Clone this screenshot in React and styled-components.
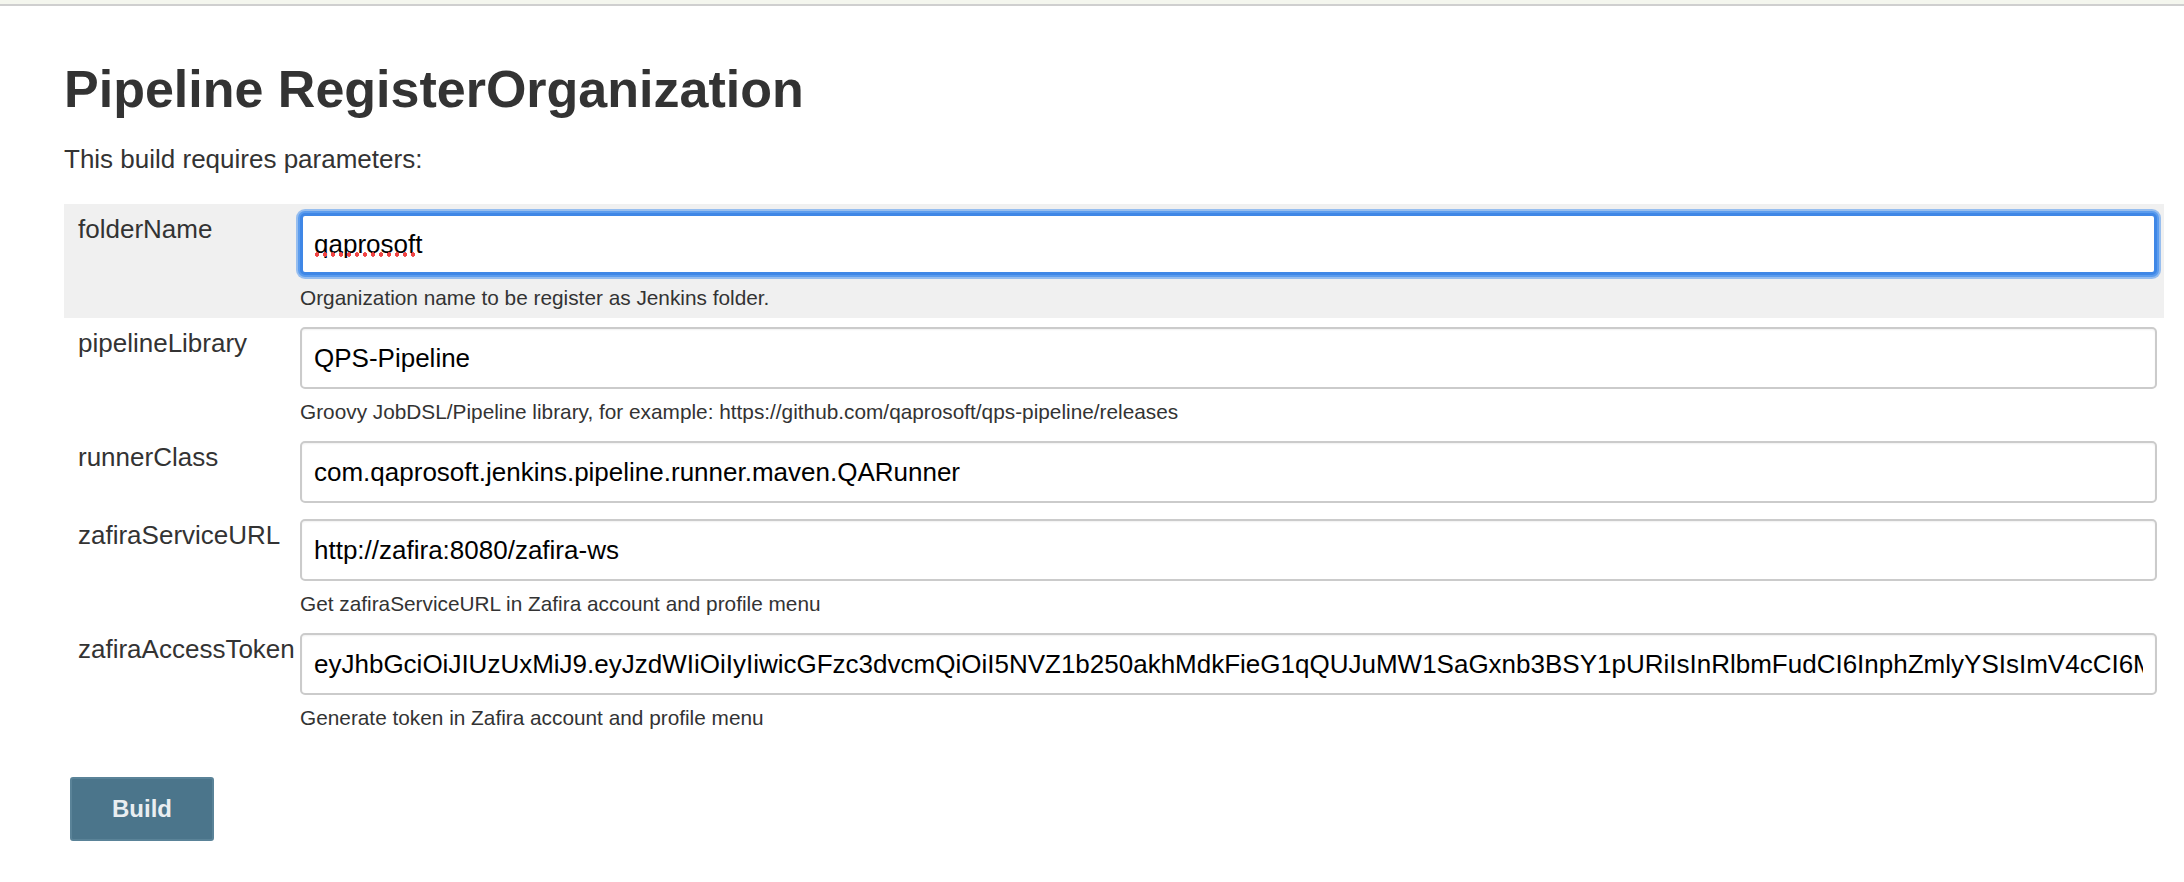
import React from 'react';
import styled, { createGlobalStyle } from 'styled-components';

const GlobalStyle = createGlobalStyle`
  body {
    margin: 0;
    background: #fff;
    font-family: 'Liberation Sans', Arial, Helvetica, sans-serif;
    color: #333;
  }
`;

const TopStrip = styled.div`
  height: 4px;
  background: #f4f6ee;
  border-bottom: 2px solid #cfcfcf;
`;

const Main = styled.div`
  padding: 0 20px 40px 64px;
`;

const Title = styled.h1`
  margin: 53px 0 0;
  font-size: 52px;
  line-height: 60px;
  font-weight: bold;
  color: #333;
`;

const Intro = styled.p`
  margin: 24px 0 0;
  font-size: 26px;
  line-height: 32px;
`;

const ParamTable = styled.div`
  margin-top: 29px;
  display: flex;
  flex-direction: column;
`;

const ParamRow = styled.div`
  display: grid;
  grid-template-columns: 236px 1fr;
  padding: 9px 7px 7px 0;
  background: ${p => (p.$active ? '#f0f0f0' : 'transparent')};
`;

const ParamName = styled.div`
  padding-left: 14px;
  font-size: 26px;
  line-height: 32px;
  white-space: nowrap;
  color: #333;
`;

const FieldColumn = styled.div`
  display: flex;
  flex-direction: column;
  min-width: 0;
`;

const FieldWrap = styled.div`
  position: relative;
`;

const TextInput = styled.input`
  box-sizing: border-box;
  display: block;
  width: 100%;
  height: 62px;
  padding: 0 ${p => (p.$focused ? '11px' : '12px')};
  font-family: inherit;
  font-size: 26px;
  color: #000;
  background: #fff;
  border: ${p => (p.$focused ? '3px solid #3f87e6' : '2px solid #cbcbcb')};
  border-radius: 5px;
  outline: none;
  box-shadow: ${p =>
    p.$focused
      ? '0 0 0 2px #5b9cee, 0 0 0 4px rgba(91, 156, 238, 0.6)'
      : 'inset 0 1px 2px rgba(0, 0, 0, 0.06)'};
`;

const SpellMark = styled.span`
  position: absolute;
  left: 13px;
  top: 39px;
  width: 104px;
  height: 5px;
  background-image: radial-gradient(circle, #f04444 2px, transparent 2.5px);
  background-size: 8px 5px;
  background-repeat: repeat-x;
`;

const Help = styled.div`
  margin-top: 10px;
  font-size: 20.8px;
  line-height: 26px;
  color: #333;
`;

const BuildButton = styled.button`
  margin: 39px 0 0 6px;
  width: 144px;
  height: 64px;
  background: #4b758b;
  border: 2px solid #5a8398;
  border-radius: 3px;
  color: #e9eef1;
  font-family: inherit;
  font-size: 24px;
  font-weight: bold;
  cursor: pointer;
`;

const TOKEN =
  'eyJhbGciOiJIUzUxMiJ9.eyJzdWIiOiIyIiwicGFzc3dvcmQiOiI5NVZ1b250akhMdkFieG1qQUJuMW1SaGxnb3BSY1pURiIsInRlbmFudCI6InphZmlyYSIsImV4cCI6MTkwNjM5OTQ0NH0.kMz4n0xJp7QeRr2tW9yVbZ3uAcFg';

const params = [
  {
    name: 'folderName',
    value: 'qaprosoft',
    help: 'Organization name to be register as Jenkins folder.',
    focused: true,
  },
  {
    name: 'pipelineLibrary',
    value: 'QPS-Pipeline',
    help: 'Groovy JobDSL/Pipeline library, for example: https://github.com/qaprosoft/qps-pipeline/releases',
  },
  {
    name: 'runnerClass',
    value: 'com.qaprosoft.jenkins.pipeline.runner.maven.QARunner',
  },
  {
    name: 'zafiraServiceURL',
    value: 'http://zafira:8080/zafira-ws',
    help: 'Get zafiraServiceURL in Zafira account and profile menu',
  },
  {
    name: 'zafiraAccessToken',
    value: TOKEN,
    help: 'Generate token in Zafira account and profile menu',
  },
];

const App = () => (
  <>
    <GlobalStyle />
    <TopStrip />
    <Main>
      <Title>Pipeline RegisterOrganization</Title>
      <Intro>This build requires parameters:</Intro>
      <ParamTable>
        {params.map(param => (
          <ParamRow key={param.name} $active={param.focused}>
            <ParamName>{param.name}</ParamName>
            <FieldColumn>
              <FieldWrap>
                <TextInput
                  type="text"
                  name={param.name}
                  defaultValue={param.value}
                  $focused={param.focused}
                  spellCheck={false}
                />
                {param.focused && <SpellMark />}
              </FieldWrap>
              {param.help && <Help>{param.help}</Help>}
            </FieldColumn>
          </ParamRow>
        ))}
      </ParamTable>
      <BuildButton type="button">Build</BuildButton>
    </Main>
  </>
);

export default App;
